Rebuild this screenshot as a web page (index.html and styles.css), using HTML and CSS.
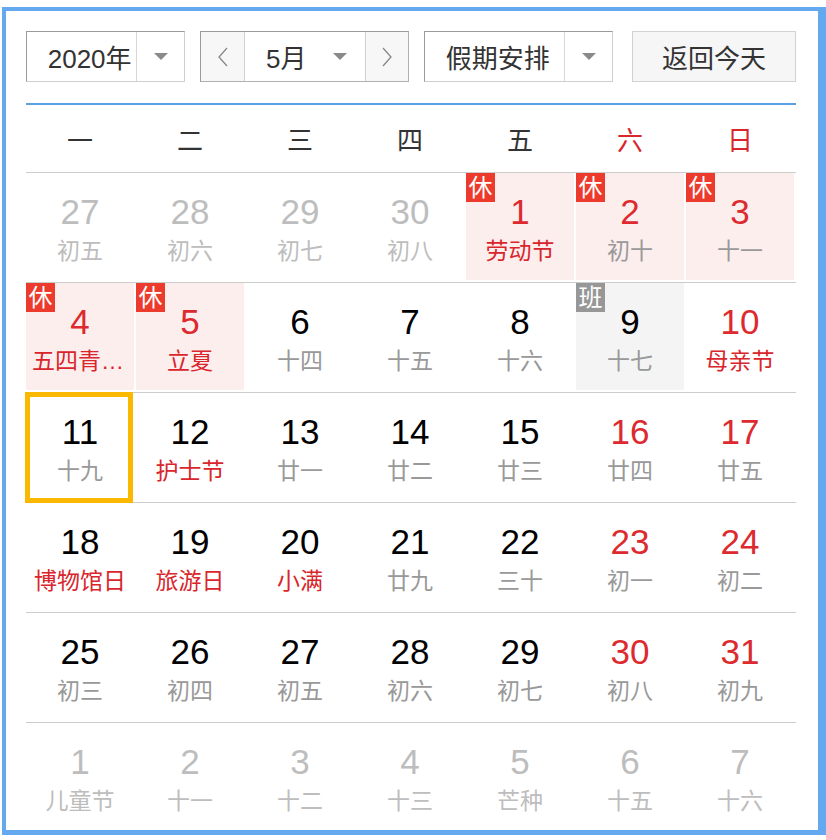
FILE: index.html
```html
<!DOCTYPE html>
<html lang="zh-CN">
<head>
<meta charset="utf-8">
<title>万年历</title>
<link rel="stylesheet" href="styles.css">
</head>
<body>
<div class="cal">
  <div class="toolbar">
    <div class="select year">
      <span class="sel-text">2020年</span>
      <span class="sel-arrow"><i class="tri"></i></span>
    </div>
    <div class="month-group">
      <span class="nav prev"><svg width="14" height="20" viewBox="0 0 14 20"><polyline points="11,1 3,10 11,19" fill="none" stroke="#888" stroke-width="1.3"/></svg></span>
      <span class="month-sel"><span class="m-text">5月</span><i class="tri"></i></span>
      <span class="nav next"><svg width="14" height="20" viewBox="0 0 14 20"><polyline points="3,1 11,10 3,19" fill="none" stroke="#888" stroke-width="1.3"/></svg></span>
    </div>
    <div class="select holiday">
      <span class="sel-text">假期安排</span>
      <span class="sel-arrow"><i class="tri"></i></span>
    </div>
    <div class="today-btn">返回今天</div>
  </div>
  <div class="blue-line"></div>
  <div class="weekdays">
    <span>一</span><span>二</span><span>三</span><span>四</span><span>五</span><span class="we">六</span><span class="we">日</span>
  </div>
  <div class="rows">
    <div class="row">
      <div class="cell other"><div class="num">27</div><div class="lunar">初五</div></div>
      <div class="cell other"><div class="num">28</div><div class="lunar">初六</div></div>
      <div class="cell other"><div class="num">29</div><div class="lunar">初七</div></div>
      <div class="cell other"><div class="num">30</div><div class="lunar">初八</div></div>
      <div class="cell hol"><span class="badge">休</span><div class="num red">1</div><div class="lunar red">劳动节</div></div>
      <div class="cell hol"><span class="badge">休</span><div class="num red">2</div><div class="lunar">初十</div></div>
      <div class="cell hol"><span class="badge">休</span><div class="num red">3</div><div class="lunar">十一</div></div>
    </div>
    <div class="row">
      <div class="cell hol"><span class="badge">休</span><div class="num red">4</div><div class="lunar red">五四青年节</div></div>
      <div class="cell hol"><span class="badge">休</span><div class="num red">5</div><div class="lunar red">立夏</div></div>
      <div class="cell"><div class="num">6</div><div class="lunar">十四</div></div>
      <div class="cell"><div class="num">7</div><div class="lunar">十五</div></div>
      <div class="cell"><div class="num">8</div><div class="lunar">十六</div></div>
      <div class="cell work"><span class="badge gray">班</span><div class="num">9</div><div class="lunar">十七</div></div>
      <div class="cell"><div class="num red">10</div><div class="lunar red">母亲节</div></div>
    </div>
    <div class="row">
      <div class="cell today"><span class="today-frame"></span><div class="num">11</div><div class="lunar">十九</div></div>
      <div class="cell"><div class="num">12</div><div class="lunar red">护士节</div></div>
      <div class="cell"><div class="num">13</div><div class="lunar">廿一</div></div>
      <div class="cell"><div class="num">14</div><div class="lunar">廿二</div></div>
      <div class="cell"><div class="num">15</div><div class="lunar">廿三</div></div>
      <div class="cell"><div class="num red">16</div><div class="lunar">廿四</div></div>
      <div class="cell"><div class="num red">17</div><div class="lunar">廿五</div></div>
    </div>
    <div class="row">
      <div class="cell"><div class="num">18</div><div class="lunar red">博物馆日</div></div>
      <div class="cell"><div class="num">19</div><div class="lunar red">旅游日</div></div>
      <div class="cell"><div class="num">20</div><div class="lunar red">小满</div></div>
      <div class="cell"><div class="num">21</div><div class="lunar">廿九</div></div>
      <div class="cell"><div class="num">22</div><div class="lunar">三十</div></div>
      <div class="cell"><div class="num red">23</div><div class="lunar">初一</div></div>
      <div class="cell"><div class="num red">24</div><div class="lunar">初二</div></div>
    </div>
    <div class="row">
      <div class="cell"><div class="num">25</div><div class="lunar">初三</div></div>
      <div class="cell"><div class="num">26</div><div class="lunar">初四</div></div>
      <div class="cell"><div class="num">27</div><div class="lunar">初五</div></div>
      <div class="cell"><div class="num">28</div><div class="lunar">初六</div></div>
      <div class="cell"><div class="num">29</div><div class="lunar">初七</div></div>
      <div class="cell"><div class="num red">30</div><div class="lunar">初八</div></div>
      <div class="cell"><div class="num red">31</div><div class="lunar">初九</div></div>
    </div>
    <div class="row last">
      <div class="cell other"><div class="num">1</div><div class="lunar">儿童节</div></div>
      <div class="cell other"><div class="num">2</div><div class="lunar">十一</div></div>
      <div class="cell other"><div class="num">3</div><div class="lunar">十二</div></div>
      <div class="cell other"><div class="num">4</div><div class="lunar">十三</div></div>
      <div class="cell other"><div class="num">5</div><div class="lunar">芒种</div></div>
      <div class="cell other"><div class="num">6</div><div class="lunar">十五</div></div>
      <div class="cell other"><div class="num">7</div><div class="lunar">十六</div></div>
    </div>
  </div>
</div>
</body>
</html>
```

FILE: styles.css
```css
* { box-sizing: border-box; }
html, body {
  margin: 0;
  padding: 0;
  background: #fff;
}
body {
  font-family: "Liberation Sans", "Noto Sans CJK SC", sans-serif;
  color: #333;
}
.cal {
  margin: 7px 0 0 2px;
  width: 824px;
  height: 828px;
  border-style: solid;
  border-color: #64a9ef;
  border-width: 4px 8px 5px 4px;
  padding: 20px 22px 0 20px;
  overflow: hidden;
}
.toolbar {
  display: flex;
  height: 51px;
  align-items: stretch;
}
.select {
  display: flex;
  border: 1px solid;
  border-color: #9a9a9a #cfcfcf #cfcfcf #9a9a9a;
  background: #fff;
  font-size: 26px;
  color: #333;
}
.sel-text {
  display: flex;
  align-items: center;
  justify-content: center;
  border-right: 1px solid #d6d6d6;
}
.sel-arrow {
  display: flex;
  align-items: center;
  justify-content: center;
  width: 47px;
}
.tri {
  display: block;
  width: 0;
  height: 0;
  border-left: 7px solid transparent;
  border-right: 7px solid transparent;
  border-top: 7px solid #8a8a8a;
}
.year { width: 159px; }
.year .sel-text { width: 111px; padding-left: 16px; }
.month-group {
  margin-left: 15px;
  width: 209px;
  display: flex;
  border: 1px solid;
  border-color: #9a9a9a #b0b0b0 #b0b0b0 #9a9a9a;
}
.nav {
  width: 44px;
  display: flex;
  align-items: center;
  justify-content: center;
  background: #f7f7f7;
}
.prev { border-right: 1px solid #d0d0d0; }
.next { border-left: 1px solid #d0d0d0; flex: 1; }
.month-sel {
  width: 120px;
  display: flex;
  align-items: center;
  justify-content: space-between;
  padding: 0 18px 0 21px;
  font-size: 26px;
  color: #333;
  background: #fff;
}
.holiday { margin-left: 15px; width: 189px; }
.holiday .sel-text { width: 141px; padding-left: 6px; }
.today-btn {
  margin-left: 19px;
  width: 164px;
  display: flex;
  align-items: center;
  justify-content: center;
  font-size: 26px;
  color: #333;
  background: #f6f6f6;
  border: 1px solid #d2d2d2;
}
.blue-line {
  margin-top: 21px;
  height: 2px;
  background: #5c9fe2;
}
.weekdays {
  display: flex;
  height: 68px;
  border-bottom: 1px solid #cccccc;
}
.weekdays span {
  width: 110px;
  display: flex;
  align-items: center;
  justify-content: center;
  font-size: 26px;
  color: #333;
  padding-right: 2px;
}
.weekdays .we { color: #d8262c; }
.row {
  display: flex;
  height: 110px;
  border-bottom: 1px solid #cccccc;
}
.row.last { border-bottom: none; }
.cell {
  position: relative;
  width: 110px;
  height: 109px;
  padding: 20px 2px 0 0;
  text-align: center;
}
.cell.hol {
  background: linear-gradient(#fdeeee, #fdeeee) no-repeat 0 0 / 108px 107px;
}
.cell.work {
  background: linear-gradient(#f4f4f4, #f4f4f4) no-repeat 0 0 / 108px 107px;
}
.num {
  font-size: 35px;
  line-height: 38px;
  color: #000;
}
.lunar {
  margin-top: 1px;
  font-size: 23px;
  line-height: 38px;
  color: #999;
  padding: 0 6px;
  white-space: nowrap;
  overflow: hidden;
  text-overflow: ellipsis;
}
.num.red { color: #dc2a2e; }
.lunar.red { color: #d8262c; }
.cell.other .num,
.cell.other .lunar { color: #bdbdbd; }
.badge {
  position: absolute;
  top: 0;
  left: 0;
  width: 29px;
  height: 29px;
  background: #ec3b2c;
  color: #fff;
  font-size: 24px;
  line-height: 29px;
  text-align: center;
}
.badge.gray { background: #979797; }
.today-frame {
  position: absolute;
  top: -1px;
  left: -1px;
  width: 108px;
  height: 111px;
  border: 5px solid #fbb800;
}
```
